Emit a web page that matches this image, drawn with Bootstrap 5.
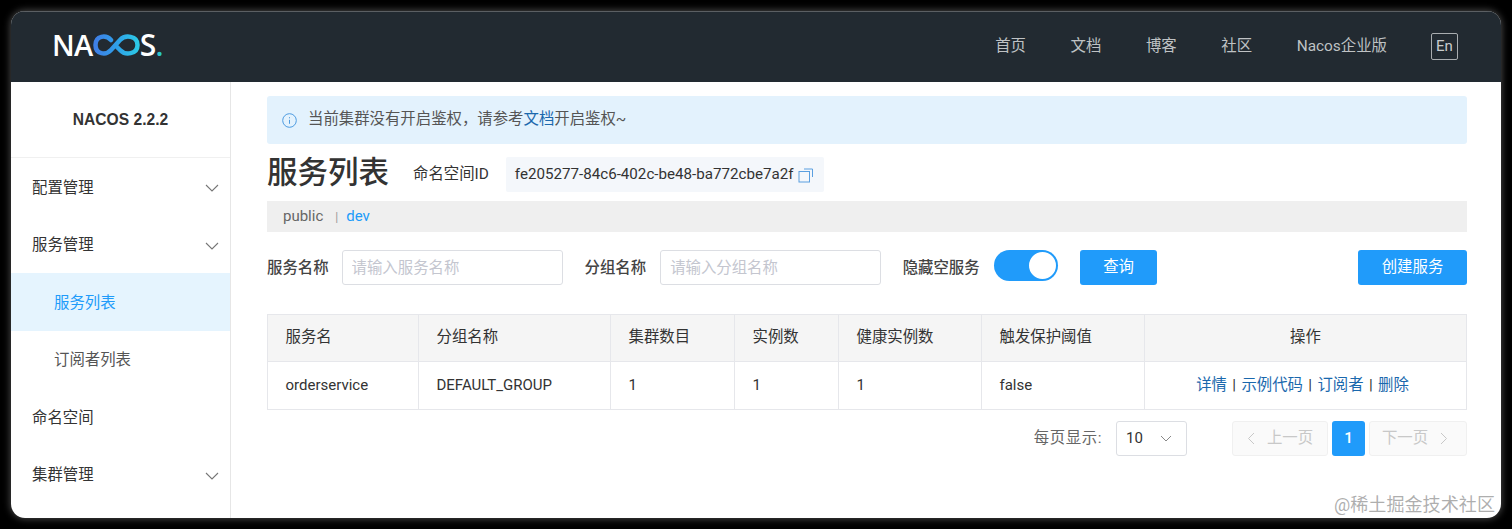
<!doctype html>
<html lang="zh">
<head>
<meta charset="utf-8">
<title>Nacos</title>
<link href="https://cdn.jsdelivr.net/npm/bootstrap@5.3.0/dist/css/bootstrap.min.css" rel="stylesheet">
<style>
html,body{height:100%;}
body{background:#000;padding:11px;font-family:Roboto,"Noto Sans CJK SC",sans-serif;font-size:15.4px;color:#333;overflow:hidden;}
.nc-window{position:relative;width:1490px;height:507px;background:#fff;border-radius:14px;overflow:hidden;}
.nc-frame{border-radius:14px;box-shadow:0 0 7px 1px rgba(130,130,130,.55);height:507px;width:1490px;}
.nc-top{height:71px;background:#222a31;padding:0 43px 1px 41px;border-top:1px solid #5b5f63;}
.nc-logo{font-family:"Open Sans",sans-serif;font-weight:600;font-size:29px;line-height:1;color:#fff;letter-spacing:-.6px;margin-bottom:4px;}
.nc-s{font-size:30px;}
.nc-dot{color:#2bc6c9;}
.nc-link{color:#bfc2c4;font-size:15.4px;text-decoration:none;}
.nc-links{gap:44.600px;}
.nc-en{width:27px;height:27px;border:1px solid #a9adb0;border-radius:2px;color:#c9cccd;font-size:15px;margin-left:44px;line-height:24px;text-align:center;}
.nc-side{width:220px;flex:none;border-right:1px solid #e6e6e6;height:436px;}
.nc-brand{height:76px;border-bottom:1px solid #f0f0f0;font-family:"Liberation Sans",sans-serif;font-weight:700;font-size:15.6px;color:#333;padding-top:1px;}
.nc-item{height:57.5px;padding:3px 11px 0 21px;color:#333;}
.nc-sub{padding-left:43px;color:#555;}
.nc-active{background:#e5f4fe;color:#209bfa;}
.nc-main{padding:14px 34px 0 36px;width:1270px;}
.nc-alert{height:48px;background:#e3f2fd;border:0;border-radius:3px;padding:0 0 0 15px;margin:0;color:#555;gap:11px;font-size:15.4px;}
.nc-alert a{color:#1a68ad;text-decoration:none;}
.nc-head{height:48px;padding-top:11px;margin-top:1px;}
.nc-title{font-size:30.5px;font-weight:500;margin:-3px 0 0;color:#333;line-height:1;}
.nc-label{margin-left:24px;color:#333;}
.nc-id{margin-left:17px;height:35px;background:#f4f7fb;padding:0 10px 0 9px;font-size:15.15px;gap:5px;border-radius:2px;}
.nc-ns{height:31px;margin-top:8px;background:#efefef;padding-left:16px;color:#666;font-size:15px;}
.nc-ns i{font-style:normal;color:#999;margin:0 8px 0 12px;font-size:12px;}
.nc-ns b{font-weight:400;color:#209bfa;}
.nc-form{height:36px;margin-top:18px;}
.nc-flabel{font-weight:500;color:#444;white-space:nowrap;padding-top:1px;}
.nc-input.form-control{width:221px;height:35px;margin-left:13px;border:1px solid #dcdee3;border-radius:3px;padding:0 9px;font-size:15.4px;box-shadow:none;}
.nc-input.nc-input2.form-control{margin-left:14px;}
.nc-input.form-control::placeholder{color:#c4c6cf;}
.nc-gap{margin-left:22px;}
.nc-gap2{margin-left:21.500px;}
.nc-switch{width:64px;height:31px;border-radius:16px;background:#209bfa;margin:0 22px 5px 14.500px;position:relative;}
.nc-knob{position:absolute;right:2px;top:2px;width:27px;height:27px;border-radius:50%;background:#fff;}
.nc-btn.btn{height:35px;background:#209bfa;color:#fff;border:0;border-radius:3px;font-size:15.4px;padding:0;}
.nc-table{margin:28px 0 0;border-color:#e6e7eb;table-layout:fixed;width:1199px;font-size:15.4px;}
.nc-table th,.nc-table td{padding:0 17.500px;vertical-align:middle;color:#333;}
.nc-table thead th{height:47px;background:#f5f5f5;font-weight:400;}
.nc-table tbody td{height:48px;font-size:15px;}
.nc-table .nc-ops{font-size:15.4px;word-spacing:1.500px;padding:0 6px 0 0;}
.nc-table a{color:#1a68ad;text-decoration:none;}
.nc-pager{margin-top:11px;height:35px;color:#666;}
.nc-per{letter-spacing:.6px;}
.nc-size{width:71px;height:35px;border:1px solid #dcdee3;border-radius:3px;padding:0 14px 0 9px;color:#333;margin:0 45px 0 14px;font-size:15px;}
.nc-pg{height:35px;background:#fafafa;border:1px solid #f0f0f0;border-radius:3px;color:#c8c8c8;gap:12px;}
.nc-pg-next{padding-right:6px;}
.nc-cur{width:33px;height:35px;background:#209bfa;color:#fff;border-radius:3px;margin:0 4px;font-weight:500;}
.nc-mark{position:absolute;right:6px;bottom:0;color:rgba(120,120,120,.6);font-size:18.1px;line-height:26px;}
</style>
</head>
<body>
<div class="nc-frame">
<div class="nc-window">
  <nav class="nc-top d-flex align-items-center justify-content-between">
    <div class="nc-logo d-flex align-items-center">NA<svg width="47" height="22" viewBox="0 0 47 22" fill="none"><defs><linearGradient id="ncg" x1="0" x2="1" y1="0" y2="0"><stop offset="0" stop-color="#3f7fe6"/><stop offset=".5" stop-color="#2f9fe8"/><stop offset="1" stop-color="#2cc8e6"/></linearGradient></defs><path d="M18 6C13 .5 2.500 1.500 2.500 11C2.500 20.500 13 21.500 18 16L27 6C32 .5 44.500 1.500 44.500 11C44.500 20.500 32 21.500 27 16L23.500 12.500" stroke="url(#ncg)" stroke-width="4.500" stroke-linecap="round"/></svg><span class="nc-s">S</span><span class="nc-dot">.</span></div>
    <div class="d-flex align-items-center">
      <div class="d-flex nc-links">
        <a class="nc-link" href="#">首页</a><a class="nc-link" href="#">文档</a><a class="nc-link" href="#">博客</a><a class="nc-link" href="#">社区</a><a class="nc-link" href="#">Nacos企业版</a>
      </div>
      <div class="nc-en">En</div>
    </div>
  </nav>
  <div class="d-flex">
    <aside class="nc-side">
      <div class="nc-brand d-flex align-items-center justify-content-center">NACOS 2.2.2</div>
      <div class="nc-item d-flex align-items-center justify-content-between">配置管理<svg width="14" height="8" viewBox="0 0 14 8" fill="none"><path d="M1 1l6 6 6-6" stroke="#777" stroke-width="1.100"/></svg></div>
      <div class="nc-item d-flex align-items-center justify-content-between">服务管理<svg width="14" height="8" viewBox="0 0 14 8" fill="none"><path d="M1 1l6 6 6-6" stroke="#777" stroke-width="1.100"/></svg></div>
      <div class="nc-item nc-sub nc-active d-flex align-items-center">服务列表</div>
      <div class="nc-item nc-sub d-flex align-items-center">订阅者列表</div>
      <div class="nc-item d-flex align-items-center">命名空间</div>
      <div class="nc-item d-flex align-items-center justify-content-between">集群管理<svg width="14" height="8" viewBox="0 0 14 8" fill="none"><path d="M1 1l6 6 6-6" stroke="#777" stroke-width="1.100"/></svg></div>
    </aside>
    <main class="nc-main">
      <div class="alert nc-alert d-flex align-items-center">
        <svg width="15" height="15" viewBox="0 0 15 15" fill="none"><circle cx="7.500" cy="7.500" r="6.800" stroke="#4d9be0" stroke-width="1"/><path d="M7.500 6.800v4M7.500 4.200v1.100" stroke="#4d9be0" stroke-width="1"/></svg>
        <span>当前集群没有开启鉴权，请参考<a href="#">文档</a>开启鉴权~</span>
      </div>
      <div class="nc-head d-flex align-items-center">
        <h1 class="nc-title">服务列表</h1>
        <span class="nc-label">命名空间ID</span>
        <span class="nc-id d-flex align-items-center">fe205277-84c6-402c-be48-ba772cbe7a2f<svg width="16" height="16" viewBox="0 0 16 16" fill="none"><rect x="1" y="4.500" width="10.500" height="10.500" stroke="#5a9fe0"/><path d="M6 2h8.500v8" stroke="#5a9fe0"/></svg></span>
      </div>
      <div class="nc-ns d-flex align-items-center">public<i>|</i><b>dev</b></div>
      <div class="nc-form d-flex align-items-start">
        <span class="nc-flabel align-self-center">服务名称</span>
        <input class="form-control nc-input" placeholder="请输入服务名称">
        <span class="nc-flabel nc-gap align-self-center">分组名称</span>
        <input class="form-control nc-input nc-input2" placeholder="请输入分组名称">
        <span class="nc-flabel nc-gap2 align-self-center">隐藏空服务</span>
        <div class="nc-switch"><span class="nc-knob"></span></div>
        <button class="btn nc-btn" style="width:77px">查询</button>
        <button class="btn nc-btn ms-auto" style="width:109px">创建服务</button>
      </div>
      <table class="table table-bordered nc-table">
        <colgroup><col style="width:151px"><col style="width:192px"><col style="width:124px"><col style="width:104px"><col style="width:143px"><col style="width:163px"><col style="width:322px"></colgroup>
        <thead><tr><th>服务名</th><th>分组名称</th><th>集群数目</th><th>实例数</th><th>健康实例数</th><th>触发保护阈值</th><th class="text-center">操作</th></tr></thead>
        <tbody><tr><td>orderservice</td><td>DEFAULT_GROUP</td><td>1</td><td>1</td><td>1</td><td>false</td><td class="text-center nc-ops"><a href="#">详情</a> | <a href="#">示例代码</a> | <a href="#">订阅者</a> | <a href="#">删除</a></td></tr></tbody>
      </table>
      <div class="nc-pager d-flex align-items-center justify-content-end">
        <span class="nc-per">每页显示:</span>
        <div class="nc-size d-flex align-items-center justify-content-between">10<svg width="12" height="7" viewBox="0 0 12 7" fill="none"><path d="M1 1l5 5 5-5" stroke="#888" stroke-width="1"/></svg></div>
        <div class="nc-pg d-flex align-items-center justify-content-center" style="width:96px"><svg width="8" height="13" viewBox="0 0 8 13" fill="none"><path d="M7 1L1.500 6.500 7 12" stroke="#c8c8c8"/></svg>上一页</div>
        <div class="nc-cur d-flex align-items-center justify-content-center">1</div>
        <div class="nc-pg nc-pg-next d-flex align-items-center justify-content-center" style="width:98px">下一页<svg width="8" height="13" viewBox="0 0 8 13" fill="none"><path d="M1 1l5.500 5.500L1 12" stroke="#c8c8c8"/></svg></div>
      </div>
    </main>
  </div>
  <div class="nc-mark">@稀土掘金技术社区</div>
</div>
</div>
<script src="https://cdn.jsdelivr.net/npm/bootstrap@5.3.0/dist/js/bootstrap.bundle.min.js"></script>
</body>
</html>
